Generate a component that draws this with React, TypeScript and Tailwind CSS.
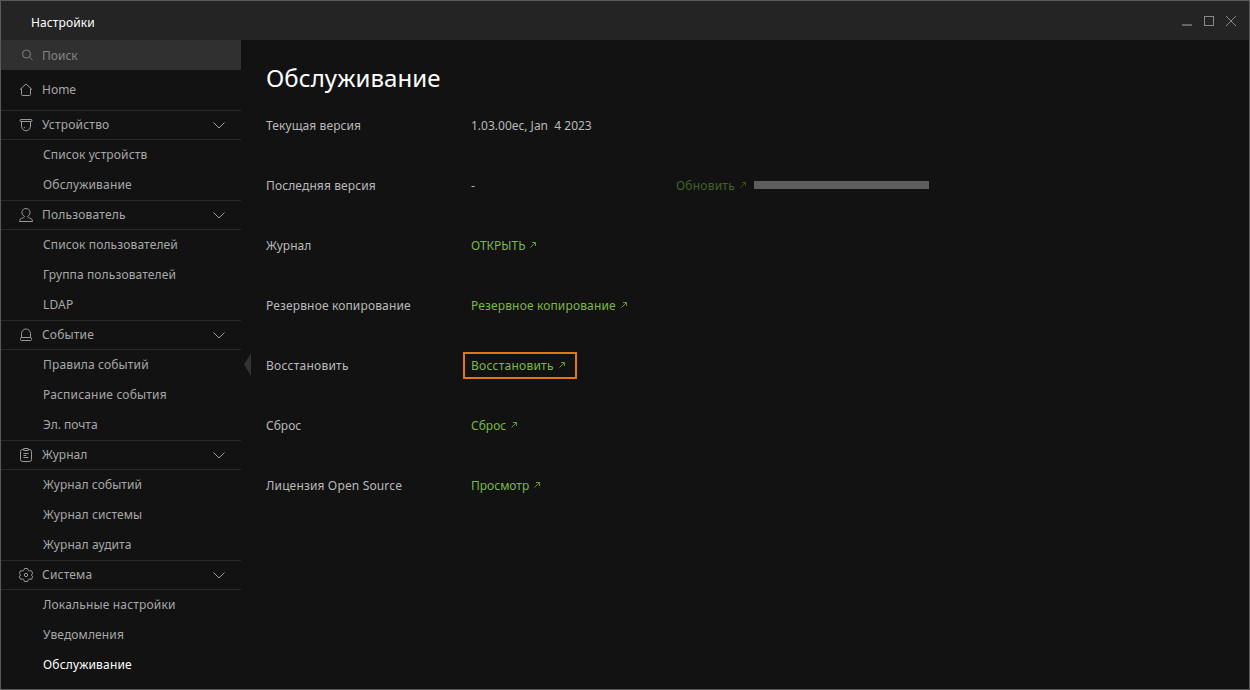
import type { ReactNode } from 'react';

type Item = { label: string; tracking?: string };
type Group = Item & { icon: ReactNode; items: Item[] };

function Glyph({ children }: { children: ReactNode }) {
  return (
    <svg width="16" height="16" viewBox="0 0 16 16" fill="none" stroke="#999" strokeWidth="1" className="shrink-0">
      {children}
    </svg>
  );
}

const homeIcon = (
  <Glyph>
    <path d="M2 7.500 8 2 14 7.500M3.500 6.500v6q0 1 1 1h7q1 0 1-1v-6" />
  </Glyph>
);

const deviceIcon = (
  <Glyph>
    <rect x="2" y="2.500" width="12" height="2" rx="1" />
    <path d="M3.500 4.500v4.500a4.500 4.800 0 0 0 9 0V4.500" />
    <circle cx="6.500" cy="10.500" r="0.300" />
  </Glyph>
);

const userIcon = (
  <Glyph>
    <path d="M6.500 9.500C2.500 7 3.500 1.500 8 1.500s5.500 5.500 1.500 8c0 .7 1 1.200 2 1.500 2 .6 3 1.500 3 3.500h-13c0-2 1-2.900 3-3.500 1-.3 2-.8 2-1.500Z" />
  </Glyph>
);

const eventIcon = (
  <Glyph>
    <path d="M3.500 10.500v-4a4.500 4.500 0 0 1 9 0v4" />
    <rect x="2.500" y="10.500" width="11" height="3" rx="1" />
  </Glyph>
);

const logIcon = (
  <Glyph>
    <path d="M5.500 2.500h-1q-2 0-2 2v8q0 2 2 2h7q2 0 2-2v-8q0-2-2-2h-1" />
    <rect x="5.500" y="1.500" width="5" height="2" rx=".5" />
    <path d="M5.500 6.500h5M5.500 8.500h3M5.500 10.500h5" />
  </Glyph>
);

const systemIcon = (
  <Glyph>
    <path
      d="M6.500 1.500h3l.8 2 .9.500 2.200-.3 1.300 2.500L13.400 8l1.300 1.800-1.300 2.500-2.200-.3-.9.500-.8 2h-3l-.8-2-.9-.5-2.200.3-1.300-2.500L2.600 8 1.300 6.200l1.300-2.500 2.200.3.900-.5Z"
      strokeLinejoin="round"
    />
    <circle cx="8" cy="8" r="1.700" />
  </Glyph>
);

const groups: Group[] = [
  {
    label: 'Устройство',
    tracking: 'tracking-[0.2px]',
    icon: deviceIcon,
    items: [
      { label: 'Список устройств', tracking: 'tracking-[0.13px]' },
      { label: 'Обслуживание', tracking: 'tracking-[0.17px]' },
    ],
  },
  {
    label: 'Пользователь',
    tracking: 'tracking-[0.18px]',
    icon: userIcon,
    items: [
      { label: 'Список пользователей', tracking: 'tracking-[0.13px]' },
      { label: 'Группа пользователей', tracking: 'tracking-[0.12px]' },
      { label: 'LDAP', tracking: 'tracking-[0.15px]' },
    ],
  },
  {
    label: 'Событие',
    tracking: 'tracking-[0.17px]',
    icon: eventIcon,
    items: [
      { label: 'Правила событий', tracking: 'tracking-[0.15px]' },
      { label: 'Расписание события', tracking: 'tracking-[0.18px]' },
      { label: 'Эл. почта' },
    ],
  },
  {
    label: 'Журнал',
    icon: logIcon,
    items: [
      { label: 'Журнал событий', tracking: 'tracking-[0.07px]' },
      { label: 'Журнал системы', tracking: 'tracking-[0.08px]' },
      { label: 'Журнал аудита', tracking: 'tracking-[0.08px]' },
    ],
  },
  {
    label: 'Система',
    tracking: 'tracking-[0.2px]',
    icon: systemIcon,
    items: [
      { label: 'Локальные настройки', tracking: 'tracking-[0.17px]' },
      { label: 'Уведомления', tracking: 'tracking-[0.13px]' },
      { label: 'Обслуживание', tracking: 'tracking-[0.17px]' },
    ],
  },
];

function ActionLink({ label, tracking = '', disabled = false }: Item & { disabled?: boolean }) {
  return (
    <a className={`flex items-center gap-[5px] ${disabled ? 'text-[#436228]' : 'text-[#7cb843]'}`}>
      <span className={`pt-0.5 ${tracking}`}>{label}</span>
      <svg width="7" height="6" viewBox="0 0 7 6" fill="none" stroke="currentColor" strokeWidth="0.8">
        <path d="M2 .5h3.500V4M5.300.700.500 5.500" />
      </svg>
    </a>
  );
}

function Row({ label, tracking = '', children }: Item & { children: ReactNode }) {
  return (
    <div className="flex h-[60px] items-center">
      <div className={`w-[205px] shrink-0 pt-0.5 ${tracking}`}>{label}</div>
      {children}
    </div>
  );
}

function Sidebar() {
  return (
    <nav className="w-60 shrink-0 text-[#a8a8a8]">
      <div className="flex h-[30px] items-center bg-[#303030] pl-5 text-[#868686]">
        <svg width="12" height="12" viewBox="0 0 12 12" fill="none" stroke="#888" strokeWidth="0.9" className="mb-px">
          <circle cx="5.500" cy="5" r="4" />
          <path d="m8.500 8 3.200 3.200" />
        </svg>
        <span className="ml-[9px] pt-0.5">Поиск</span>
      </div>
      <div className="flex h-10 items-center pl-[17px]">
        {homeIcon}
        <span className="ml-2">Home</span>
      </div>
      {groups.map((group) => (
        <section key={group.label}>
          <div className="flex h-[30px] items-center border-y border-[#2a2a2a] pr-4 pl-[17px]">
            {group.icon}
            <span className={`ml-2 ${group.tracking ?? ''}`}>{group.label}</span>
            <svg width="12" height="7" viewBox="0 0 12 7" fill="none" stroke="#b0b0b0" strokeWidth="0.9" className="mt-px ml-auto">
              <path d="m.5.500 5.500 5.500L11.500.500" />
            </svg>
          </div>
          {group.items.map((item) => (
            <div
              key={item.label}
              className={`flex h-[30px] items-center pl-[42px] ${item.tracking ?? ''} ${
                group.label === 'Система' && item.label === 'Обслуживание' ? 'text-white' : ''
              }`}
            >
              {item.label}
            </div>
          ))}
        </section>
      ))}
    </nav>
  );
}

export default function App() {
  return (
    <div className="flex h-[690px] w-[1250px] flex-col overflow-hidden border border-[#5a5a5a] bg-[#121212] font-['Noto_Sans',sans-serif] text-[12px] leading-4 whitespace-pre">
      <header className="flex h-[39px] shrink-0 items-center justify-between bg-[#242424] pr-3 pl-[30px]">
        <span className="mt-1 tracking-[0.12px] text-white">Настройки</span>
        <svg width="56" height="12" viewBox="0 0 56 12" fill="none" stroke="#8a8a8a" className="mt-0.5">
          <path d="M1 9h10" stroke="#666" strokeWidth="2" />
          <rect x="23.500" y="0.500" width="9" height="9" />
          <path d="m45 0 10 10M55 0 45 10" />
        </svg>
      </header>
      <div className="flex flex-1">
        <Sidebar />
        <div className="flex w-[25px] flex-col pt-[313px] pl-[3px]">
          <svg width="7" height="23" viewBox="0 0 7 23" fill="#333">
            <path d="M7 0v23L0 11.500Z" />
          </svg>
        </div>
        <main className="flex-1 text-[#bababa]">
          <h1 className="mt-[21px] mb-[1px] text-2xl leading-[33px] tracking-[0.08px] text-white">Обслуживание</h1>
          <Row label="Текущая версия" tracking="tracking-[0.1px]">
            <span className="pt-0.5">1.03.00ec, Jan  4 2023</span>
          </Row>
          <Row label="Последняя версия" tracking="tracking-[0.12px]">
            <span className="w-[205px] pt-0.5">-</span>
            <ActionLink label="Обновить" tracking="tracking-[0.22px]" disabled />
            <div className="ml-[7px] h-2 w-[175px] bg-[#5e5e5e]" />
          </Row>
          <Row label="Журнал">
            <ActionLink label="ОТКРЫТЬ" />
          </Row>
          <Row label="Резервное копирование" tracking="tracking-[0.14px]">
            <ActionLink label="Резервное копирование" tracking="tracking-[0.14px]" />
          </Row>
          <Row label="Восстановить" tracking="tracking-[0.25px]">
            <div className="-ml-2 flex h-[27px] w-[114px] items-center border-2 border-[#e8750e] pl-1.5">
              <ActionLink label="Восстановить" tracking="tracking-[0.25px]" />
            </div>
          </Row>
          <Row label="Сброс">
            <ActionLink label="Сброс" />
          </Row>
          <Row label="Лицензия Open Source" tracking="tracking-[0.15px]">
            <ActionLink label="Просмотр" />
          </Row>
        </main>
      </div>
    </div>
  );
}
